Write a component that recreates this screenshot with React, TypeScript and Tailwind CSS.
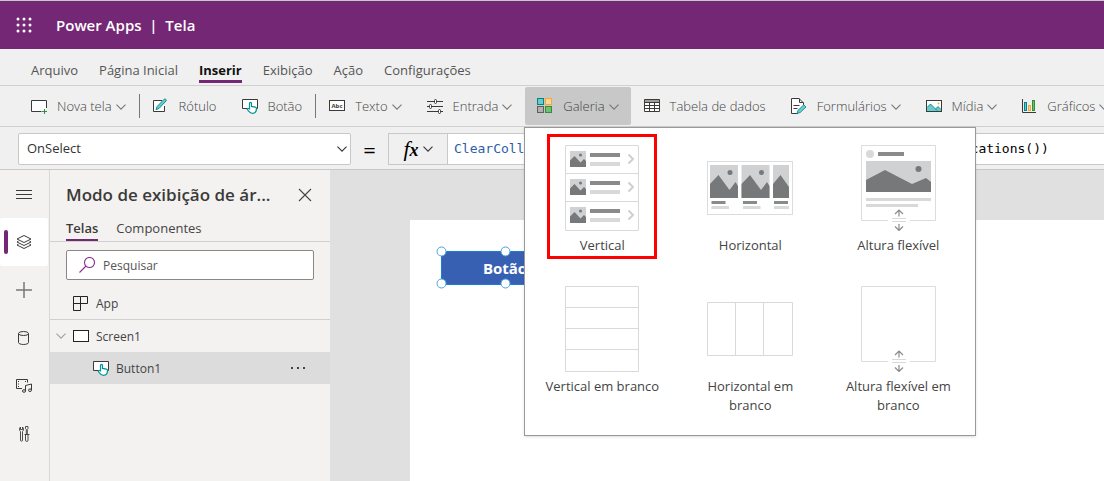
import React, { useState } from "react";

const ICON = "#3b3a39";
const TEAL = "#038387";

const Chevron = ({ color = "#777777" }: any) => (
  <svg width="10" height="6" viewBox="0 0 10 6" fill="none" stroke={color} strokeWidth="1.1">
    <path d="M0.5 0.7 5 5.2 9.5 0.7" />
  </svg>
);

const NewScreenIcon = () => (
  <svg width="16" height="16" viewBox="0 0 16 16" fill="none">
    <path d="M10.5 13.5H.5v-11h15V10" fill="#fff" stroke={ICON} />
    <path d="M13.5 11v5M11 13.5h5" stroke="#319035" />
  </svg>
);

const LabelIcon = () => (
  <svg width="16" height="16" viewBox="0 0 16 16" fill="none">
    <path d="M9 2.5H.5v11h11V8" stroke={ICON} fill="#fff" />
    <path d="M3 11.8l1.2-3.4L11.2 1.2a1 1 0 0 1 1.4 0l.4.4a1 1 0 0 1 0 1.4L6.2 10.3z" fill="#69cccc" stroke={TEAL} strokeWidth=".9" />
  </svg>
);

const ButtonIcon = () => (
  <svg width="16" height="16" viewBox="0 0 16 16" fill="none">
    <path d="M5.5 10.5H.5v-9h15v9h-2" fill="#fff" stroke={ICON} />
    <path
      d="M7.5 10.8V5.4a1 1 0 0 1 2 0v3l3.8.8c.8.2 1.2.7 1.2 1.4 0 2.7-1.2 4.8-4 4.8-2.3 0-3.5-1.3-5.2-4.1.5-.9 1.500-1 2.200-.5z"
      fill="#fff"
      stroke="#009297"
      strokeWidth="1.2"
    />
  </svg>
);

const TextIcon = () => (
  <svg width="16" height="16" viewBox="0 0 16 16" fill="none">
    <rect x=".5" y="2.5" width="15" height="10" fill="#fff" stroke={ICON} />
    <text x="8" y="10" textAnchor="middle" fontSize="6" fontWeight="700" fontFamily="Open Sans, sans-serif" fill={ICON}>
      Abc
    </text>
  </svg>
);

const InputIcon = () => (
  <svg width="16" height="16" viewBox="0 0 16 16" fill="#fff" stroke={ICON}>
    <path d="M0 3.5h16M0 8.5h16M0 13.5h16" />
    <rect x="7.5" y="1.5" width="2" height="4" rx="1" />
    <rect x="2.5" y="6.5" width="2" height="4" rx="1" />
    <rect x="11.5" y="11.5" width="2" height="4" rx="1" />
  </svg>
);

const GalleryIcon = () => (
  <svg width="16" height="16" viewBox="0 0 16 16">
    <rect x=".5" y=".5" width="6" height="6" fill="#69cccc" stroke={TEAL} />
    <rect x="8.5" y=".5" width="6" height="6" fill="#ffd590" stroke="#f2a93b" />
    <rect x=".5" y="8.5" width="6" height="6" fill="#b3b0ad" stroke="#605e5c" />
    <rect x="8.5" y="8.5" width="6" height="6" fill="#6fbf73" stroke="#319035" />
  </svg>
);

const TableIcon = () => (
  <svg width="16" height="16" viewBox="0 0 16 16" fill="none">
    <rect x=".5" y="1.5" width="15" height="12" fill="#fff" />
    <rect x=".5" y="1.5" width="15" height="3" fill="#a19f9d" />
    <path d="M.5 1.5h15v12H.5zM.5 4.5h15M.5 7.5h15M.5 10.5h15M5.5 4.5v9M10.5 4.5v9" stroke={ICON} />
  </svg>
);

const FormIcon = () => (
  <svg width="16" height="16" viewBox="0 0 16 16" fill="none">
    <path d="M7 15.5H.5V.5H8L12.5 5v2" fill="#fff" stroke={ICON} />
    <path d="M8.5.5v4h4M2.5 7.5h6M2.5 10.5h4" stroke={ICON} />
    <path d="M6 15.5l1-3.2 5.8-5.500L15 9l-5.800 5.500z" fill="#69cccc" stroke={TEAL} strokeWidth=".8" />
  </svg>
);

const MediaIcon = () => (
  <svg width="16" height="16" viewBox="0 0 16 16" fill="none">
    <rect x=".5" y="2.5" width="15" height="11" fill="#fff" stroke={ICON} />
    <path d="M1 9.5 4.5 6l5 5L12 8.5l3 3V13H1z" fill="#69cccc" />
    <path d="M1 9.5 4.5 6 11 12.5M9.5 11 12 8.5l3 3" stroke={TEAL} strokeWidth=".9" />
    <circle cx="12.5" cy="5.5" r=".9" fill="#f2a93b" />
  </svg>
);

const ChartIcon = () => (
  <svg width="15" height="16" viewBox="0 0 15 16" fill="none">
    <path d="M.5 1v13.5H14" stroke={ICON} />
    <rect x="2.5" y="4.5" width="2" height="8" fill="#69cccc" stroke={TEAL} />
    <rect x="6.5" y="7.5" width="2" height="5" fill="#ffd590" stroke="#f2a93b" />
    <rect x="10.5" y="2.5" width="2" height="10" fill="#6fbf73" stroke="#319035" />
  </svg>
);

const SunHill = ({ x, y }: any) => (
  <g transform={`translate(${x} ${y})`}>
    <rect width="16" height="16" fill="#d0d1d2" />
    <path d="M0 9.5 4.5 5l6 6.5L14 8l2 2v6H0z" fill="#77787a" />
    <circle cx="10.5" cy="4" r="1.5" fill="#77787a" />
    <path d="M20 4h30" stroke="#8a8a8a" strokeWidth="4" />
    <path d="M20 13h30" stroke="#d9d9d9" strokeWidth="4" />
    <path d="M58.5 3.5 63 8l-4.5 4.5" stroke="#cfcfcf" strokeWidth="2" fill="none" />
  </g>
);

const VerticalArt = () => (
  <svg width="74" height="86" viewBox="0 0 74 86" fill="none">
    <path d="M.5.5h73v85H.5zM.5 28.5h73M.5 56.5h73" stroke="#d9d9d9" />
    <SunHill x={5} y={6} />
    <SunHill x={5} y={34} />
    <SunHill x={5} y={62} />
  </svg>
);

const HorizontalArt = () => (
  <svg width="86" height="54" viewBox="0 0 86 54" fill="none">
    <rect x=".5" y=".5" width="85" height="53" stroke="#dcdcdc" />
    {[3, 34.5].map((x) => (
      <g key={x} transform={`translate(${x} 4)`}>
        <rect width="28" height="33" fill="#d0d1d2" />
        <path d="M0 19 8.5 10l11 15 6-8 2.5 4v12H0z" fill="#77787a" />
        <circle cx="20" cy="7.5" r="2.5" fill="#77787a" />
        <path d="M1.5 37.5h14" stroke="#8a8a8a" strokeWidth="3" />
        <path d="M1.5 42.5H19" stroke="#d9d9d9" strokeWidth="3" />
      </g>
    ))}
    <g transform="translate(66 4)">
      <rect width="16" height="33" fill="#d0d1d2" />
      <path d="M0 19 7.5 10 16 22v11H0z" fill="#77787a" />
      <path d="M1 37.5h14" stroke="#8a8a8a" strokeWidth="3" />
      <path d="M1 42.5h15" stroke="#d9d9d9" strokeWidth="3" />
    </g>
  </svg>
);

const FlexibleFrame = () => (
  <>
    <path d="M27 75.5H.5V.5h74v75H49" stroke="#dcdcdc" />
    <path d="M31 73.5h14M31 76.5h14" stroke="#d9d9d9" />
    <path d="M38 71.5v-6M34 69l4-4 4 4M38 79v6M34 81.5l4 4 4-4" stroke="#8a8a8a" strokeWidth="1.2" />
  </>
);

const FlexibleArt = () => (
  <svg width="75" height="86" viewBox="0 0 75 86" fill="none">
    <FlexibleFrame />
    <circle cx="9" cy="9" r="4" fill="#d9d9d9" />
    <path d="M17 9h26" stroke="#8a8a8a" strokeWidth="4" />
    <rect x="5" y="16" width="65" height="31" fill="#d0d1d2" />
    <path d="M5 35 24 25l27 14 14-6 5 4v10H5z" fill="#77787a" />
    <circle cx="57.5" cy="24" r="3" fill="#77787a" />
    <path d="M5 54.5h65M5 60.5h52" stroke="#d9d9d9" strokeWidth="3" />
  </svg>
);

const BlankVerticalArt = () => (
  <svg width="74" height="86" viewBox="0 0 74 86" fill="none" stroke="#d9d9d9">
    <path d="M.5.5h73v85H.5zM.5 21.5h73M.5 42.5h73M.5 63.5h73" />
  </svg>
);

const BlankHorizontalArt = () => (
  <svg width="86" height="54" viewBox="0 0 86 54" fill="none" stroke="#d9d9d9">
    <path d="M.5.5h85v53H.5zM28.5.5v53M56.5.5v53" />
  </svg>
);

const BlankFlexibleArt = () => (
  <svg width="75" height="86" viewBox="0 0 75 86" fill="none">
    <FlexibleFrame />
  </svg>
);

const galleryOptions = [
  { name: "Vertical", art: <VerticalArt />, marked: true },
  { name: "Horizontal", art: <HorizontalArt /> },
  { name: "Altura flexível", art: <FlexibleArt /> },
  { name: "Vertical em branco", art: <BlankVerticalArt /> },
  { name: "Horizontal em branco", art: <BlankHorizontalArt /> },
  { name: "Altura flexível em branco", art: <BlankFlexibleArt /> },
];

const GalleryMenu = () => (
  <div
    role="menu"
    aria-label="Galeria"
    className="absolute -left-px top-full z-20 mt-[2px] grid w-[452px] grid-cols-3 gap-y-4 border border-[#999999] bg-white px-[3px] pt-[6px] pb-[17px] shadow-sm"
  >
    {galleryOptions.map((option) => (
      <button
        key={option.name}
        role="menuitem"
        className={`flex flex-col items-center justify-self-center border-[3px] pt-2 text-[13px] leading-[19px] text-[#444444] ${
          option.marked ? "h-[125px] w-[110px] border-[#ff0000]" : "w-[134px] border-transparent"
        }`}
      >
        <span className="flex h-[86px] shrink-0 items-center">{option.art}</span>
        <span className="mt-[5px]">{option.name}</span>
      </button>
    ))}
  </div>
);

const tabs = ["Arquivo", "Página Inicial", "Inserir", "Exibição", "Ação", "Configurações"];

const tools = [
  { name: "Nova tela", icon: <NewScreenIcon />, menu: true, divider: true },
  { name: "Rótulo", icon: <LabelIcon /> },
  { name: "Botão", icon: <ButtonIcon />, divider: true },
  { name: "Texto", icon: <TextIcon />, menu: true },
  { name: "Entrada", icon: <InputIcon />, menu: true },
  { name: "Galeria", icon: <GalleryIcon />, menu: true },
  { name: "Tabela de dados", icon: <TableIcon /> },
  { name: "Formulários", icon: <FormIcon />, menu: true },
  { name: "Mídia", icon: <MediaIcon />, menu: true },
  { name: "Gráficos", icon: <ChartIcon />, menu: true },
];

const Header = () => (
  <header className="flex h-[49px] items-center border-t border-[#c8c8c8] bg-[#742774] pl-4 text-white">
    <button aria-label="Iniciador de aplicativos">
      <svg width="16" height="16" viewBox="0 0 16 16" fill="#fff">
        {[2, 8, 14].map((y) => [2, 8, 14].map((x) => <circle key={`${x}-${y}`} cx={x} cy={y} r="1.5" />))}
      </svg>
    </button>
    <span className="ml-6 whitespace-pre text-[15px] font-semibold">Power Apps  |  Tela</span>
  </header>
);

const Ribbon = ({ open, setOpen }: any) => (
  <>
    <nav className="flex h-[37px] items-start gap-[21px] border-b border-[#d0d0d0] pl-[31px] pt-3 text-[13px] leading-[19px] text-[#555555]">
      {tabs.map((tab) => (
        <a
          key={tab}
          href="#"
          className={
            tab === "Inserir"
              ? "h-[22px] border-b-[3px] border-[#742774] font-bold text-[#111111]"
              : "h-[22px]"
          }
        >
          {tab}
        </a>
      ))}
    </nav>
    <div className="flex h-[41px] items-start gap-px border-b border-[#d0d0d0] pl-[19px] pt-px text-[13px] text-[#444444]">
      {tools.map((tool) => (
        <div key={tool.name} className="relative flex shrink-0 items-center gap-px">
          <button
            onClick={() => tool.name === "Galeria" && setOpen(!open)}
            className={`flex h-[38px] items-center gap-[10px] whitespace-nowrap rounded-[2px] px-3 font-light ${
              tool.name === "Galeria" && open ? "bg-[#c8c8c8]" : ""
            }`}
          >
            {tool.icon}
            <span className="flex items-center gap-1 pt-[2px]">
              {tool.name}
              {tool.menu && <Chevron />}
            </span>
          </button>
          {tool.divider && <span className="h-6 w-px bg-[#777777]" />}
          {tool.name === "Galeria" && open && <GalleryMenu />}
        </div>
      ))}
    </div>
  </>
);

const FormulaBar = () => (
  <div className="flex h-[43px] items-start border-b border-[#c8c8c8] pl-[18px] pt-[6px]">
    <div className="relative w-[333px] shrink-0">
      <select
        aria-label="Propriedade"
        className="h-8 w-full appearance-none rounded-[2px] border border-[#c8c8c8] bg-white pl-2 text-[13px] text-[#333333]"
      >
        <option>OnSelect</option>
      </select>
      <span className="pointer-events-none absolute right-1 top-[13px]">
        <Chevron color="#333333" />
      </span>
    </div>
    <span className="w-[37px] shrink-0 text-center text-[22px] leading-8 text-black">=</span>
    <button
      aria-label="Função"
      className="flex h-8 w-[60px] shrink-0 items-center justify-center gap-1 border border-[#c8c8c8] font-['Liberation_Serif',serif] text-[22px] italic leading-none text-black"
    >
      <span>
        f<span className="text-[18px] font-bold">x</span>
      </span>
      <Chevron color="#333333" />
    </button>
    <div
      role="textbox"
      aria-label="Fórmula"
      contentEditable
      suppressContentEditableWarning
      className="h-8 min-w-0 flex-1 overflow-hidden whitespace-nowrap border-y border-[#c8c8c8] bg-white pl-[6px] font-['DejaVu_Sans_Mono',monospace] text-[13px] leading-[30px] text-black"
    >
      <span className="text-[#2b5da8]">ClearCollect</span>
      (NotificationsCollection, 'Notifications'.GetAllNotifications())
    </div>
  </div>
);

const LayersIcon = () => (
  <svg width="16" height="16" viewBox="0 0 16 16" fill="none" stroke={ICON}>
    <path d="M1 5 8 1.5 15 5 8 8.5zM1 8l7 3.5L15 8M1 8l1.5-.8M15 8l-1.5-.8M1 11l7 3.5 7-3.5M1 11l1.5-.8M15 11l-1.5-.8" />
  </svg>
);

const railItems = [
  {
    name: "Menu",
    icon: (
      <svg width="16" height="16" viewBox="0 0 16 16" stroke={ICON}>
        <path d="M0 4.5h16M0 8.5h16M0 12.5h16" />
      </svg>
    ),
  },
  { name: "Modo de exibição de árvore", icon: <LayersIcon />, active: true },
  {
    name: "Inserir",
    icon: (
      <svg width="16" height="16" viewBox="0 0 16 16" stroke="#7a7877" strokeWidth="1.5">
        <path d="M0 8h16M8 0v16" />
      </svg>
    ),
  },
  {
    name: "Dados",
    icon: (
      <svg width="16" height="16" viewBox="0 0 16 16" fill="none" stroke={ICON}>
        <ellipse cx="7.5" cy="3.5" rx="5" ry="2" />
        <path d="M2.5 3.5v9c0 1.1 2.2 2 5 2s5-.9 5-2v-9" />
      </svg>
    ),
  },
  {
    name: "Mídia",
    icon: (
      <svg width="16" height="16" viewBox="0 0 16 16" fill="none" stroke={ICON}>
        <path d="M6 10.5H.5v-9h11v3" />
        <path d="M2.5 3v7M9.5 3v2" strokeDasharray="1 1.5" />
        <path d="M9.5 13V7.5l6-1.5v6" />
        <ellipse cx="8" cy="13" rx="1.5" ry="1.3" />
        <ellipse cx="14" cy="12.2" rx="1.5" ry="1.3" />
      </svg>
    ),
  },
  {
    name: "Ferramentas",
    icon: (
      <svg width="12" height="16" viewBox="0 0 12 16" fill="none" stroke={ICON} strokeWidth=".9">
        <path d="M2.5 5.5v8.700a1 1 0 0 0 2 0V5.500c.8-.6 1.100-1.500 1-2.600-.2-.9-.5-1.500-1-1.900v2.500h-2V1C2 1.400 1.700 2 1.500 2.900c-.1 1.100.2 2 1 2.600z" />
        <path d="M7.5.5H10v2l-.7 1v5h-1v-5l-.8-1zM6.5 8.500h5M7.500 8.500v5.700a1.200 1.200 0 0 0 2.500 0V8.500" />
      </svg>
    ),
  },
];

const Rail = () => (
  <nav className="flex w-[50px] shrink-0 flex-col border-r border-[#d8d8d8] bg-[#f3f2f1]">
    {railItems.map((item) => (
      <button
        key={item.name}
        aria-label={item.name}
        className={`relative flex h-12 w-12 items-center justify-center ${item.active ? "rounded-[2px] bg-white" : ""}`}
      >
        {item.active && <span className="absolute left-1 h-6 w-1 rounded-full bg-[#742774]" />}
        {item.icon}
      </button>
    ))}
  </nav>
);

const TreePanel = () => (
  <aside className="w-[280px] shrink-0 bg-[#f3f2f1] text-[#444444]">
    <div className="flex h-[49px] items-center justify-between pl-4 pr-[18px]">
      <h2 className="text-[17px] font-semibold text-[#3b3a39]">Modo de exibição de ár...</h2>
      <button aria-label="Fechar">
        <svg width="14" height="14" viewBox="0 0 14 14" stroke="#444444" strokeWidth="1.1">
          <path d="M1 1l12 12M13 1 1 13" />
        </svg>
      </button>
    </div>
    <div className="flex h-[23px] gap-[18px] border-b border-[#d0d0d0] pl-4 text-[13px] leading-[19px]">
      <a href="#" className="h-[22px] border-b-2 border-[#742774] font-semibold text-[#3b3a39]">
        Telas
      </a>
      <a href="#">Componentes</a>
    </div>
    <label className="mx-4 mt-2 flex h-[30px] items-center gap-2 rounded-[2px] border border-[#8a8886] bg-white pl-3">
      <svg width="16" height="16" viewBox="0 0 16 16" fill="none" stroke="#8a2f8a" strokeWidth="1.1">
        <circle cx="10.5" cy="5.5" r="5" />
        <path d="M7 9 .5 15.5" />
      </svg>
      <input
        aria-label="Pesquisar"
        placeholder="Pesquisar"
        className="min-w-0 flex-1 bg-transparent pt-px text-[12px] outline-none placeholder:text-[#555555]"
      />
    </label>
    <div className="mt-2 flex h-8 items-center gap-[7px] border-b border-[#d0d0d0] pl-[23px] text-[12px]">
      <svg width="16" height="16" viewBox="0 0 16 16" fill="none" stroke="#222222">
        <path d="M.5.5h7v14h-7zM.5 7.5h14v-7h-7" />
      </svg>
      <span className="pt-px">App</span>
    </div>
    <div className="flex h-8 items-center gap-[7px] pl-[6px] text-[12px]">
      <Chevron color="#a0a0a0" />
      <svg width="16" height="12" viewBox="0 0 16 12">
        <rect x=".5" y=".5" width="15" height="11" fill="#fff" stroke="#222222" />
      </svg>
      <span className="pt-px">Screen1</span>
    </div>
    <div className="flex h-8 items-center gap-[7px] bg-[#dcdcdc] pl-[43px] pr-6 text-[12px]">
      <ButtonIcon />
      <span className="pt-px">Button1</span>
      <button aria-label="Mais opções" className="ml-auto">
        <svg width="16" height="4" viewBox="0 0 16 4" fill="#444444">
          <path d="M1 1h2v2H1zM7 1h2v2H7zM13 1h2v2h-2z" />
        </svg>
      </button>
    </div>
  </aside>
);

const Canvas = () => (
  <main className="min-w-0 flex-1 bg-[#e0e0e0] pl-20 pt-[50px]">
    <div className="h-full bg-white pl-[31px] pt-[31px]">
      {/* selected control with its resize handles */}
      <div className="relative w-[128px]">
        <button className="h-[34px] w-full border border-[#1a7fd4] bg-[#3860b2] text-[15px] font-bold text-white">
          Botão
        </button>
        <svg className="absolute -left-[5px] -top-[5px]" width="138" height="43" viewBox="0 0 138 43" fill="#fff" stroke="#4a9fe0">
          {[5.5, 37.5].map((y) => [5.5, 69.5, 132.5].map((x) => <circle key={`${x}-${y}`} cx={x} cy={y} r="4.5" />))}
        </svg>
      </div>
    </div>
  </main>
);

const App = () => {
  const [open, setOpen] = useState(true);

  return (
    <div className="flex min-h-screen flex-col overflow-hidden bg-[#f0f0f0] font-['Open_Sans',sans-serif]">
      <Header />
      <Ribbon open={open} setOpen={setOpen} />
      <FormulaBar />
      <div className="flex flex-1">
        <Rail />
        <TreePanel />
        <Canvas />
      </div>
    </div>
  );
};

export default App;
